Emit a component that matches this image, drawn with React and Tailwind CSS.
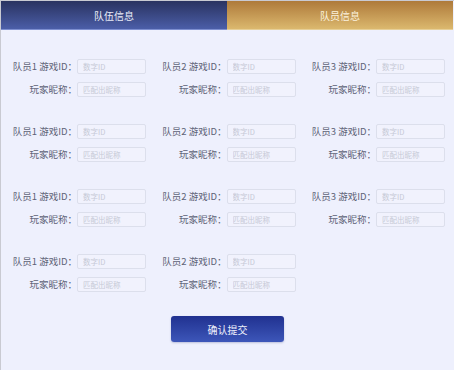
import React from "react";

const font = { fontFamily: '"Noto Sans CJK SC", "Noto Sans", sans-serif' };

const groups = [3, 3, 3, 2];

function Field({ label, placeholder }) {
  return (
    <div className="flex items-center">
      <span className="w-[66px] text-right text-[9.5px] leading-[15px] text-[#5d6276] whitespace-nowrap">
        {label}
      </span>
      <input
        readOnly
        placeholder={placeholder}
        className="w-[69px] h-[15px] rounded-[2px] border border-[#dcdfec] bg-[#f1f2fd] px-[5px] text-[7.5px] outline-none placeholder:text-[#c6c9d6]"
      />
    </div>
  );
}

export default function App() {
  return (
    <div
      className="w-[454px] h-[370px] bg-[#eef0fd] border-l border-t border-[#c9cad2] overflow-hidden"
      style={font}
    >
      {/* tabs */}
      <div className="flex h-[29px] pr-[1px]">
        <div className="flex-1 flex items-center justify-center bg-gradient-to-b from-[#2a3361] to-[#4b5ea8] text-[10px] text-[#e9ecf8] border-b border-[#7e8fd0]">
          队伍信息
        </div>
        <div className="flex-1 flex items-center justify-center bg-gradient-to-b from-[#ae7a3a] to-[#dbb86e] text-[10px] text-[#fbf1dc] border-b border-[#e6cf98]">
          队员信息
        </div>
      </div>

      {/* members */}
      <div className="pt-[29px] pl-[10px] flex flex-col gap-[27px]">
        {groups.map((n, gi) => (
          <div key={gi} className="grid grid-cols-[149.5px_149.5px_149.5px]">
            {Array.from({ length: n }).map((_, i) => (
              <div key={i} className="flex flex-col gap-[8px]">
                <Field label={`队员${i + 1} 游戏ID：`} placeholder="数字ID" />
                <Field label="玩家昵称：" placeholder="匹配出昵称" />
              </div>
            ))}
          </div>
        ))}
      </div>

      <div className="flex justify-center pt-[24px]">
        <button className="w-[113px] h-[26px] rounded-[3px] bg-gradient-to-b from-[#213190] to-[#3d56b9] text-[10px] text-[#eef0fb] shadow-[0_1px_2px_rgba(40,50,120,0.25)]">
          确认提交
        </button>
      </div>
    </div>
  );
}
